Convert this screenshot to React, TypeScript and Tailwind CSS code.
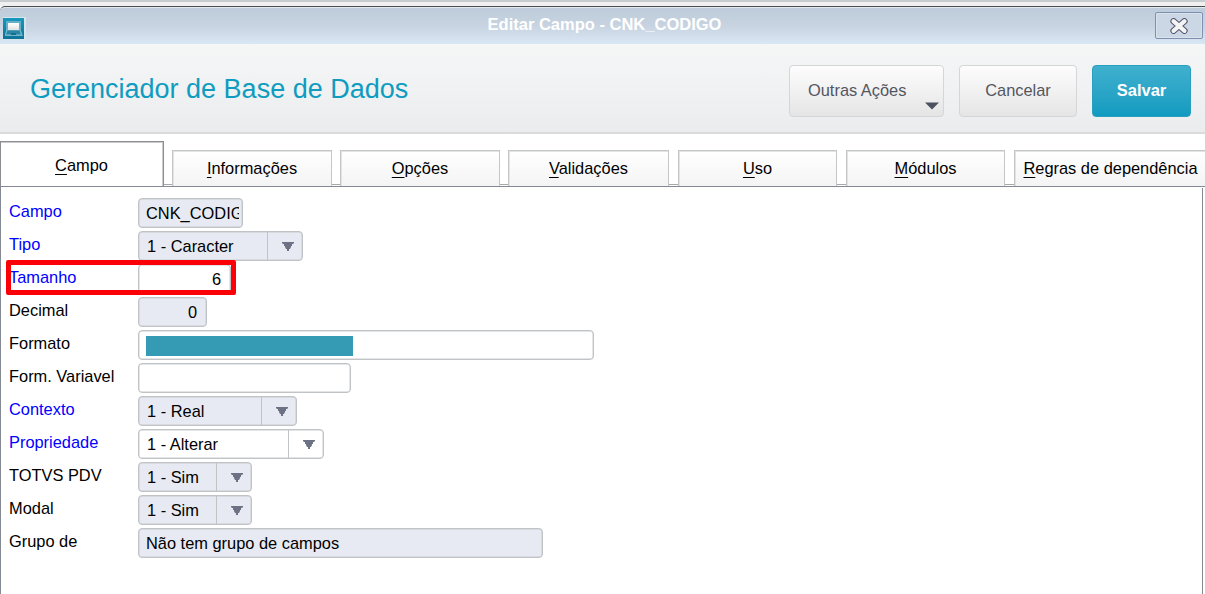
import clsx from 'clsx';

type Field = {
  label: string;
  value?: string;
  kind: 'text' | 'number' | 'select';
  width: string;
  required?: boolean;
  editable?: boolean;
  selected?: boolean;
  marked?: boolean;
};

const tabs = [
  { label: 'Informações', width: 'w-[160px]', gap: 'w-[8px]' },
  { label: 'Opções', width: 'w-[160px]', gap: 'w-[8px]' },
  { label: 'Validações', width: 'w-[161px]', gap: 'w-[8px]' },
  { label: 'Uso', width: 'w-[159px]', gap: 'w-[9px]' },
  { label: 'Módulos', width: 'w-[159px]', gap: 'w-[9px]' },
  { label: 'Regras de dependência', width: 'w-[193px]', gap: 'w-[9px]' },
];

const fields: Field[] = [
  { label: 'Campo', value: 'CNK_CODIGO', kind: 'text', width: 'w-[105px]', required: true },
  { label: 'Tipo', value: '1 - Caracter', kind: 'select', width: 'w-[165px]', required: true },
  { label: 'Tamanho', value: '6', kind: 'number', width: 'w-[93px]', required: true, editable: true, marked: true },
  { label: 'Decimal', value: '0', kind: 'number', width: 'w-[69px]' },
  { label: 'Formato', kind: 'text', width: 'w-[456px]', editable: true, selected: true },
  { label: 'Form. Variavel', kind: 'text', width: 'w-[213px]', editable: true },
  { label: 'Contexto', value: '1 - Real', kind: 'select', width: 'w-[159px]', required: true },
  { label: 'Propriedade', value: '1 - Alterar', kind: 'select', width: 'w-[186px]', required: true, editable: true },
  { label: 'TOTVS PDV', value: '1 - Sim', kind: 'select', width: 'w-[114px]' },
  { label: 'Modal', value: '1 - Sim', kind: 'select', width: 'w-[114px]' },
  { label: 'Grupo de', value: 'Não tem grupo de campos', kind: 'text', width: 'w-[405px]' },
];

function AppIcon() {
  return (
    <svg width="23" height="23" viewBox="0 0 23 23" className="block">
      <defs>
        <linearGradient id="appBg" x1="0" y1="0" x2="0" y2="1">
          <stop offset="0" stopColor="#1898bd" />
          <stop offset="1" stopColor="#0d7397" />
        </linearGradient>
        <linearGradient id="appScreen" x1="0" y1="0" x2="0" y2="1">
          <stop offset="0" stopColor="#ffffff" />
          <stop offset="1" stopColor="#dfe3e4" />
        </linearGradient>
      </defs>
      <rect width="23" height="23" fill="#d9e5ec" />
      <rect width="21" height="21" y="1" fill="url(#appBg)" />
      <path d="M3 4H18V14L20 19H2L3 14Z" fill="#63b0c8" />
      <path d="M4 13H17L18.5 18H2.5Z" fill="#2b86a3" stroke="#8cc3d3" strokeWidth="0.8" />
      <rect x="5" y="6" width="11" height="7" fill="url(#appScreen)" />
      <rect x="8" y="16" width="5" height="2" fill="#126f91" />
    </svg>
  );
}

function CloseIcon() {
  return (
    <svg width="18" height="16" viewBox="0 0 18 16" className="block">
      <path d="M3.5 3.2L14.5 12.8M14.5 3.2L3.5 12.8" stroke="#50556a" strokeWidth="6.2" strokeLinecap="round" />
      <path d="M3.5 3.2L14.5 12.8M14.5 3.2L3.5 12.8" stroke="#f4f4f4" strokeWidth="4.2" strokeLinecap="round" />
    </svg>
  );
}

function TabLabel({ text }: { text: string }) {
  return (
    <span className="whitespace-nowrap">
      <span className="underline decoration-1 underline-offset-[3px]">{text[0]}</span>
      {text.slice(1)}
    </span>
  );
}

function FieldControl({ field }: { field: Field }) {
  return (
    <div
      className={clsx(
        'flex h-[30px] shrink-0 overflow-hidden rounded-[4px] border border-[#c0c4c7] leading-[28px] shadow-[inset_0_0_0_0.5px_#c8ccce]',
        field.width,
        field.editable ? 'bg-white' : 'bg-[#e7eaf2]',
      )}
    >
      {field.kind === 'select' ? (
        <>
          <span className="min-w-0 flex-1 whitespace-nowrap pl-2">{field.value}</span>
          <span className="flex w-[35px] items-center justify-center border-l border-[#c0c4c7] pl-[5px]">
            <svg width="12" height="9" viewBox="0 0 12 9">
              <path d="M0 0H12V1L11 2H10V4H9V5L8 7H7V9H5V7H4L3 5V4H2V2H1L0 1Z" fill="#6c7284" />
            </svg>
          </span>
        </>
      ) : (
        <span
          className={clsx(
            'mr-[3px] ml-[7px] flex-1 overflow-hidden whitespace-nowrap',
            field.kind === 'number' && 'pr-[6px] text-right',
          )}
        >
          {field.selected ? <span className="mt-[5px] block h-5 w-[207px] bg-[#359bb5]" /> : field.value}
        </span>
      )}
    </div>
  );
}

export default function App() {
  return (
    <div className="flex h-[594px] w-[1205px] flex-col overflow-hidden bg-white font-['Liberation_Sans',Arial,sans-serif] text-[16.4px] text-black">
      <div className="h-[6px] shrink-0 border-t-2 border-[#c7cccf] bg-[#f0f0f0]" />

      <header className="flex h-[38px] shrink-0 items-start rounded-tl-[5px] border-t border-[#4a4d50] bg-linear-to-b from-[#bdcbda] via-[#c7d3e0] to-[#d9e6f3] pr-[2px] pl-[3px] shadow-[inset_0_1px_0_#e3e9ee]">
        <div className="mt-[10px] w-[51px]">
          <AppIcon />
        </div>
        <h1 className="mt-[5px] flex-1 text-center text-[16.5px] leading-[24px] font-bold text-white">
          Editar Campo - CNK_CODIGO
        </h1>
        <button className="mt-[5px] flex h-[27px] w-[48px] items-center justify-center rounded-[2px] border border-[#7f8fae] bg-[#cbd7e5] shadow-[inset_0_0_0_1px_#d9e3ee]">
          <CloseIcon />
        </button>
      </header>

      <div className="flex h-[90px] shrink-0 items-start border-b-2 border-[#d9dbdc] bg-linear-to-b from-[#f5f7f7] to-[#ebecee] pr-[14px] pl-[30px] text-[#54565f]">
        <h2 className="mt-[27px] flex-1 text-[27px] leading-[36px] text-[#0f9cc0]">Gerenciador de Base de Dados</h2>
        <button className="mt-[21px] flex h-[52px] w-[155px] rounded-[4px] border border-[#d4d6d7] bg-linear-to-b from-[#fdfdfd] to-[#e5e5e5] pl-[18px]">
          <span className="w-[117px] text-left leading-[48px]">Outras Ações</span>
          <svg width="14" height="8" viewBox="0 0 14 8" className="mt-[36px] block shrink-0">
            <path d="M0 0.5H14L7 7.5Z" fill="#4c5160" />
          </svg>
        </button>
        <button className="mt-[21px] ml-[15px] h-[52px] w-[118px] rounded-[4px] border border-[#d4d6d7] bg-linear-to-b from-[#fdfdfd] to-[#e5e5e5] pb-[2px]">
          Cancelar
        </button>
        <button className="mt-[21px] ml-[15px] h-[52px] w-[99px] rounded-[4px] border border-[#2a9fbd] bg-linear-to-b from-[#3fb0ce] to-[#0e9bc0] pb-[2px] text-[16.5px] font-bold text-white">
          Salvar
        </button>
      </div>

      <nav className="flex h-[53px] shrink-0 items-end border-b border-[#858994]">
        <div className="flex h-[45px] w-[164px] shrink-0 items-center justify-center border border-b-0 border-[#8b8d90] pt-[3px] pr-px shadow-[inset_-1px_1px_0_#c9cbcc]">
          <TabLabel text="Campo" />
        </div>
        {tabs.map((tab) => (
          <div key={tab.label} className="flex shrink-0 items-end">
            <span className={clsx('h-[2px] border-t border-[#a6a8ab]', tab.gap)} />
            <div
              className={clsx(
                'flex h-[36px] items-center justify-center border border-b-0 border-[#c5c6c7] bg-linear-to-b from-white to-[#f4f4f5] shadow-[inset_1px_1px_0_#e2e3e3]',
                tab.width,
              )}
            >
              <TabLabel text={tab.label} />
            </div>
          </div>
        ))}
      </nav>

      <main className="flex flex-1 border-l border-[#858994] pr-[2px]">
        <div className="mt-px flex flex-1 flex-col gap-[3px] border-r border-[#858994] pt-[10px] pl-2">
          {fields.map((field) => (
            <div key={field.label} className="relative flex">
              <label className={clsx('w-[129px] shrink-0 leading-[26px]', field.required && 'text-[#0000ff]')}>
                {field.label}
              </label>
              <FieldControl field={field} />
              {field.marked && (
                <div className="absolute -top-1 -left-[3px] h-[35px] w-[230px] rounded-[2px] border-[5px] border-[#fb0007]" />
              )}
            </div>
          ))}
        </div>
      </main>
    </div>
  );
}
